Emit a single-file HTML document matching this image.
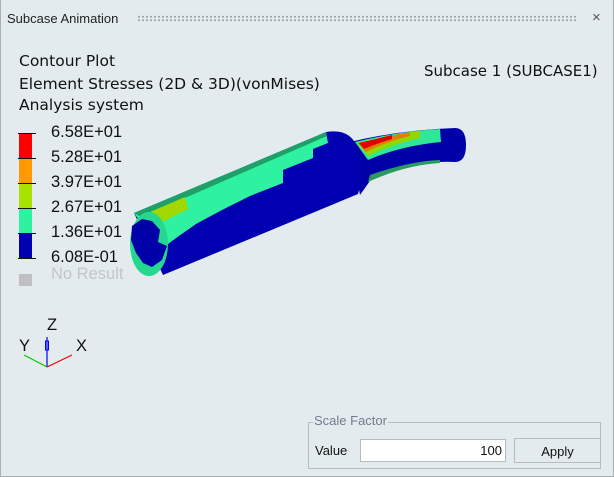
<!DOCTYPE html>
<html><head><meta charset="utf-8"><style>
*{margin:0;padding:0;box-sizing:border-box}
body{width:614px;height:477px;background:#e4ebef;position:relative;overflow:hidden;font-family:"Liberation Sans",sans-serif}
.win{position:absolute;left:0;top:0;width:614px;height:477px;border:1px solid #a9b0b5;border-top:none}
.t{position:absolute;white-space:nowrap}
.vp{font-family:"Liberation Sans",sans-serif;color:#111;font-size:16.5px}
.hd{font-family:"DejaVu Sans",sans-serif;color:#111;font-size:15.5px}
</style></head><body>
<div class="win"></div>
<div class="t" style="left:7px;top:11px;font-size:13px;color:#222">Subcase Animation</div>
<div style="position:absolute;left:137px;top:15px;width:441px;height:7px;background-image:radial-gradient(circle,#9aa3a8 0.9px,transparent 1.1px);background-size:4px 3.5px"></div>
<div class="t" style="left:592px;top:9px;font-size:15px;color:#555">×</div>

<div class="t hd" style="left:19px;top:52px">Contour Plot</div>
<div class="t hd" style="left:19px;top:75px">Element Stresses (2D &amp; 3D)(vonMises)</div>
<div class="t hd" style="left:19px;top:96px">Analysis system</div>
<div class="t hd" style="left:424px;top:62px;font-size:15px">Subcase 1 (SUBCASE1)</div>

<svg style="position:absolute;left:0;top:0" width="614" height="477">
<rect x="19" y="133" width="13" height="25" fill="#f00"/>
<rect x="19" y="158" width="13" height="25" fill="#f90"/>
<rect x="19" y="183" width="13" height="25" fill="#a8e200"/>
<rect x="19" y="208" width="13" height="25" fill="#2ef2a0"/>
<rect x="19" y="233" width="13" height="25" fill="#0000b0"/>
<g stroke="#111" stroke-width="1">
<line x1="18" y1="133.5" x2="36" y2="133.5"/><line x1="18" y1="158.5" x2="36" y2="158.5"/><line x1="18" y1="183.5" x2="36" y2="183.5"/><line x1="18" y1="208.5" x2="36" y2="208.5"/><line x1="18" y1="233.5" x2="36" y2="233.5"/><line x1="18" y1="258.5" x2="36" y2="258.5"/></g>
<rect x="19" y="274" width="13" height="12" fill="#c0c0c0"/>
<line x1="47" y1="367" x2="47" y2="337" stroke="#00f" stroke-width="1.2"/>
<rect x="45.5" y="341" width="3" height="9" fill="none" stroke="#00f"/>
<line x1="47" y1="367" x2="24" y2="355" stroke="#0c0" stroke-width="1.2"/>
<line x1="47" y1="367" x2="72" y2="355" stroke="#e00" stroke-width="1.2"/>

<!-- thin tube -->
<path d="M350 142 Q400 130 455 128 Q466 128 466 145 Q466 162 455 162 Q415 160 372 178 L360 195 Z" fill="#0000a8"/>
<path d="M355 142 Q400 131 440 129 L441 142 Q400 146 368 160 Z" fill="#2ee898"/>
<path d="M357 143 Q395 134 420 131 L420 138 Q392 144 368 156 Z" fill="#90d800"/>
<path d="M358 143 Q390 136 410 132 L410 136 Q388 141 366 152 Z" fill="#e08000"/>
<path d="M359 143 Q380 138 392 135 L392 139 Q378 143 364 149 Z" fill="#e00000"/>
<path d="M370 175 Q410 161 440 160 L440 163 Q405 165 368 182 Z" fill="#2a9a60"/>
<!-- main cylinder -->
<path d="M134 213 L326 132 Q352 128 358 150 Q364 175 358 194 L163 275 Z" fill="#0000b0"/>
<path d="M134 213 L326 132 L328 143 L313 149 L313 158 L283 170 L283 183 L250 196 L222 210 L196 224 L176 238 L160 250 Z" fill="#2ef2a0"/>
<path d="M134 213 L326 132 L327 136 L141 217 Z" fill="#1fa068"/>
<path d="M150 212 L185 197 L188 209 L160 223 Z" fill="#a0d800"/>
<ellipse cx="149" cy="244" rx="19" ry="32" fill="#25d890"/>
<path d="M132 226 L142 219 L152 221 L160 230 L158 242 L167 246 L162 260 L152 267 L143 263 L136 253 L131 240 Z" fill="#0000a8"/>
</svg>
<div class="t vp" style="left:51px;top:123px">6.58E+01</div>
<div class="t vp" style="left:51px;top:148px">5.28E+01</div>
<div class="t vp" style="left:51px;top:173px">3.97E+01</div>
<div class="t vp" style="left:51px;top:198px">2.67E+01</div>
<div class="t vp" style="left:51px;top:223px">1.36E+01</div>
<div class="t vp" style="left:51px;top:248px">6.08E-01</div>
<div class="t vp" style="left:51px;top:265px;color:#c2c6c8">No Result</div>
<div class="t vp" style="left:47px;top:316px">Z</div>
<div class="t vp" style="left:19px;top:337px">Y</div>
<div class="t vp" style="left:76px;top:337px">X</div>

<div style="position:absolute;left:308px;top:422px;width:293px;height:47px;border:1px solid #b8bcbf"></div>
<div class="t" style="left:313px;top:413px;font-size:13px;color:#6f7d8e;background:#e4ebef;padding:0 1px">Scale Factor</div>
<div class="t" style="left:315px;top:443px;font-size:13px;color:#111">Value</div>
<div style="position:absolute;left:360px;top:439px;width:146px;height:23px;background:#fff;border:1px solid #b8bcbf;font-size:13px;text-align:right;padding:3px 3px 0 0;color:#111">100</div>
<div style="position:absolute;left:514px;top:438px;width:87px;height:25px;background:#e4ebef;border:1px solid #b8bcbf;font-size:13px;text-align:center;padding-top:5px;color:#111">Apply</div>
</body></html>
